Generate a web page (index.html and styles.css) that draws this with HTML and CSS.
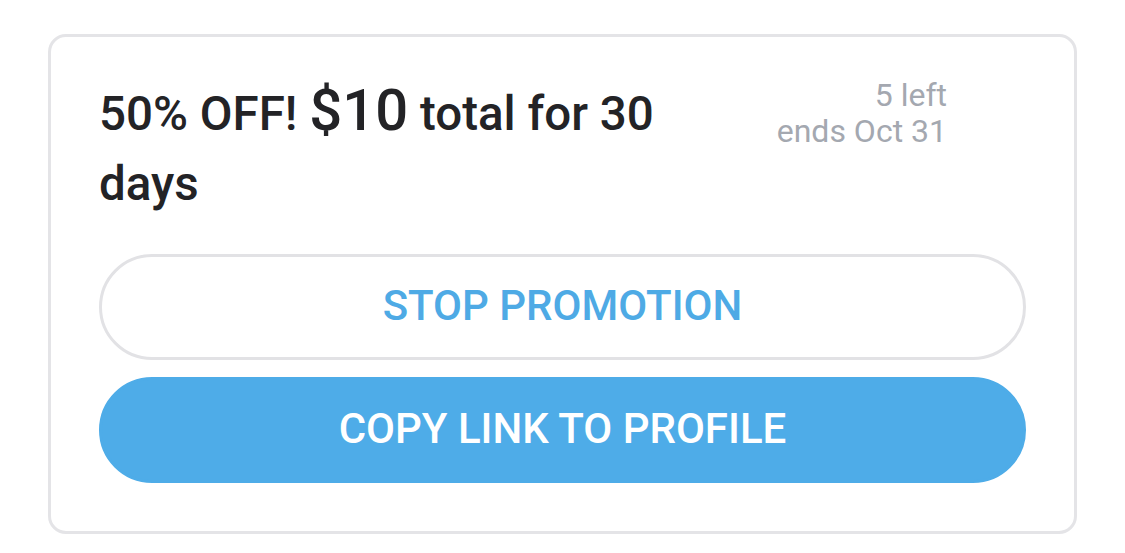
FILE: index.html
```html
<!DOCTYPE html>
<html lang="en">
<head>
  <meta charset="UTF-8">
  <meta name="viewport" content="width=device-width, initial-scale=1.0">
  <title>Promotion</title>
  <link rel="stylesheet" href="styles.css">
</head>
<body>

  <div class="promo-card">
    <div class="promo-head">
      <h2 class="promo-title">50% OFF! <span class="promo-price">$10</span> total for 30 days</h2>
      <div class="promo-meta">
        <div>5 left</div>
        <div>ends Oct 31</div>
      </div>
    </div>
    <div class="promo-actions">
      <button type="button" class="btn btn-outline">STOP PROMOTION</button>
      <button type="button" class="btn btn-primary">COPY LINK TO PROFILE</button>
    </div>
  </div>

</body>
</html>
```

FILE: styles.css
```css
body {
  margin: 0;
  padding: 34px 48px;
  background: #ffffff;
  font-family: Roboto, "Liberation Sans", Arial, sans-serif;
}
.promo-card {
  background: #ffffff;
  border: 3px solid #e4e4e7;
  border-radius: 18px;
  padding: 38px 48px 48px;
}
.promo-head {
  display: flex;
  align-items: flex-start;
}
.promo-title {
  flex: 0 1 610px;
  margin: 0;
  font-size: 47.5px;
  line-height: 70px;
  font-weight: 500;
  color: #232326;
}
.promo-price {
  font-size: 58px;
}
.promo-meta {
  margin-left: auto;
  padding-top: 2px;
  padding-right: 79px;
  text-align: right;
  font-size: 32px;
  line-height: 36px;
  color: #a4a8b0;
}
.promo-actions {
  display: flex;
  flex-direction: column;
  gap: 17px;
  margin-top: 35px;
}
.btn {
  height: 106px;
  padding: 0 0 3px;
  border-radius: 60px;
  font-family: inherit;
  font-size: 42px;
  font-weight: 500;
  cursor: pointer;
}
.btn-outline {
  background: #ffffff;
  border: 3px solid #e2e2e5;
  color: #4eaae5;
}
.btn-primary {
  background: #4eace8;
  border: 3px solid #4eace8;
  color: #ffffff;
}
```
